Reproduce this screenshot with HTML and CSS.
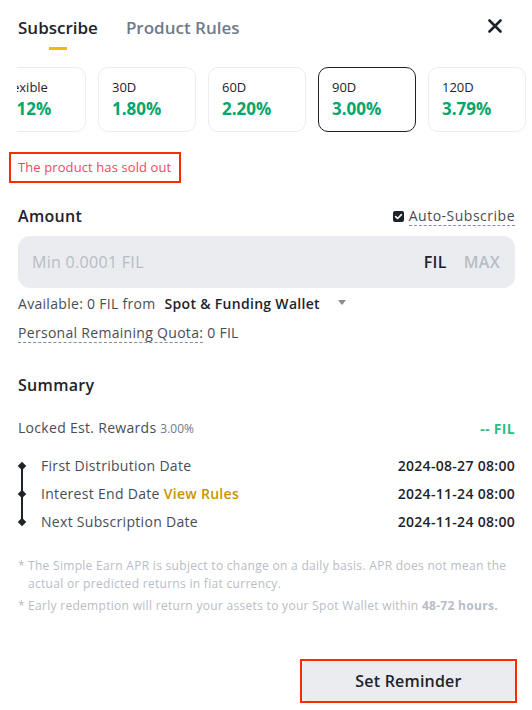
FILE: index.html
```html
<!DOCTYPE html>
<html lang="en">
<head>
<meta charset="utf-8">
<title>Subscribe</title>
<link rel="stylesheet" href="styles.css">
</head>
<body>
<div class="panel">
  <div class="tabs">
    <div class="tab active">Subscribe</div>
    <div class="tab">Product Rules</div>
    <div class="close" aria-label="Close">
      <svg width="14" height="14" viewBox="0 0 14 14"><path d="M1.5 1.5L12.5 12.5M12.5 1.5L1.5 12.5" stroke="#1e2329" stroke-width="2.6" stroke-linecap="round"/></svg>
    </div>
  </div>

  <div class="terms">
    <div class="terms-track">
      <div class="term"><div class="term-label">Flexible</div><div class="term-rate">0.12%</div></div>
      <div class="term"><div class="term-label">30D</div><div class="term-rate">1.80%</div></div>
      <div class="term"><div class="term-label">60D</div><div class="term-rate">2.20%</div></div>
      <div class="term selected"><div class="term-label">90D</div><div class="term-rate">3.00%</div></div>
      <div class="term"><div class="term-label">120D</div><div class="term-rate">3.79%</div></div>
    </div>
  </div>

  <div class="soldout">The product has sold out</div>

  <div class="amount-head">
    <div class="section-title">Amount</div>
    <label class="auto">
      <span class="checkbox"><svg width="9" height="9" viewBox="0 0 9 9"><path d="M1.6 4.6L3.6 6.5L7.4 2.6" fill="none" stroke="#fff" stroke-width="1.6" stroke-linecap="round" stroke-linejoin="round"/></svg></span>
      <span class="dashed">Auto-Subscribe</span>
    </label>
  </div>

  <div class="input">
    <span class="placeholder">Min 0.0001 FIL</span>
    <span class="unit">FIL</span>
    <span class="max">MAX</span>
  </div>

  <div class="avail">
    <span>Available: 0 FIL from</span>
    <span class="wallet">Spot &amp; Funding Wallet</span>
    <span class="caret"></span>
  </div>
  <div class="quota"><span class="dashed">Personal Remaining Quota:</span> 0 FIL</div>

  <div class="section-title summary">Summary</div>

  <div class="row rewards">
    <div>Locked Est. Rewards <span class="small">3.00%</span></div>
    <div class="green">-- FIL</div>
  </div>

  <div class="timeline">
    <div class="row tl-row">
      <div class="tl-left"><span class="diamond"></span>First Distribution Date</div>
      <div class="date">2024-08-27 08:00</div>
    </div>
    <div class="row tl-row">
      <div class="tl-left"><span class="diamond"></span>Interest End Date <span class="link">View Rules</span></div>
      <div class="date">2024-11-24 08:00</div>
    </div>
    <div class="row tl-row">
      <div class="tl-left"><span class="diamond"></span>Next Subscription Date</div>
      <div class="date">2024-11-24 08:00</div>
    </div>
  </div>

  <div class="notes">
    <div class="note"><span class="star">*</span><span>The Simple Earn APR is subject to change on a daily basis. APR does not mean the actual or predicted returns in fiat currency.</span></div>
    <div class="note"><span class="star">*</span><span>Early redemption will return your assets to your Spot Wallet within <b>48-72 hours.</b></span></div>
  </div>

  <div class="actions">
    <div class="btn-frame"><button class="btn">Set Reminder</button></div>
  </div>
</div>
</body>
</html>
```

FILE: styles.css
```css
html, body {
  margin: 0;
  padding: 0;
  background: #ffffff;
}
body {
  font-family: "Open Sans", Roboto, "Liberation Sans", sans-serif;
  color: #1e2329;
  font-size: 14px;
  letter-spacing: 0.3px;
}
.panel {
  padding: 0 17px 0 18px;
  width: 532px;
  box-sizing: border-box;
  overflow: hidden;
}
.tabs {
  height: 50px;
  display: flex;
  align-items: flex-start;
  gap: 28px;
  position: relative;
  letter-spacing: 0;
}
.tab {
  font-size: 17px;
  font-weight: 600;
  line-height: 24px;
  padding-top: 16px;
  color: #707a8a;
  position: relative;
}
.tab.active {
  color: #1e2329;
}
.tab.active::after {
  content: "";
  position: absolute;
  left: 50%;
  margin-left: -9px;
  top: 47px;
  width: 18px;
  height: 3px;
  background: #f0b90b;
}
.close {
  margin-left: auto;
  margin-right: 13px;
  padding-top: 19px;
  line-height: 0;
}
.terms {
  margin: 17px -17px 0 -1px;
  overflow: hidden;
  letter-spacing: 0;
}
.terms-track {
  display: flex;
  gap: 12px;
  margin-left: -29px;
}
.term {
  flex: 0 0 98px;
  box-sizing: border-box;
  height: 65px;
  border: 1px solid #eaecef;
  border-radius: 10px;
  padding: 9px 13px 0 13px;
}
.term.selected {
  border-color: #1e2329;
}
.term-label {
  font-size: 13px;
  line-height: 20px;
  color: #1e2329;
}
.term-rate {
  font-size: 17px;
  font-weight: 700;
  line-height: 24px;
  color: #03a66d;
}
.soldout {
  display: inline-block;
  margin: 20px 0 0 -9px;
  border: 2px solid #ff2a00;
  padding: 0 8px 0 7px;
  height: 27px;
  line-height: 27px;
  font-size: 13px;
  letter-spacing: 0.1px;
  color: #f6465d;
}
.amount-head {
  margin-top: 17px;
  display: flex;
  justify-content: space-between;
  align-items: center;
  height: 32px;
}
.section-title {
  font-size: 16px;
  font-weight: 600;
  color: #1e2329;
  line-height: 24px;
}
.auto {
  display: flex;
  align-items: center;
  gap: 5px;
  color: #474d57;
  font-size: 14px;
  letter-spacing: 0.5px;
}
.checkbox {
  width: 11px;
  height: 11px;
  border-radius: 2px;
  background: #1e2329;
  display: flex;
  align-items: center;
  justify-content: center;
}
.dashed {
  border-bottom: 1px dashed #848e9c;
  line-height: 18px;
}
.input {
  margin-top: 4px;
  height: 52px;
  border-radius: 12px;
  background: #eaecef;
  display: flex;
  align-items: center;
  padding: 0 15px 0 14px;
  font-size: 16px;
}
.placeholder {
  color: #b7bdc6;
  flex: 1;
}
.unit {
  font-weight: 600;
  color: #1e2329;
}
.max {
  font-weight: 600;
  color: #b7bdc6;
  margin-left: 17px;
}
.avail {
  margin-top: 6px;
  line-height: 20px;
  color: #474d57;
  display: flex;
  align-items: center;
}
.wallet {
  margin-left: 9px;
  font-weight: 600;
  color: #1e2329;
}
.caret {
  margin-left: 18px;
  width: 0;
  height: 0;
  border-left: 4.5px solid transparent;
  border-right: 4.5px solid transparent;
  border-top: 5px solid #848e9c;
  margin-top: -3px;
}
.quota {
  margin-top: 9px;
  line-height: 20px;
  color: #474d57;
}
.summary {
  margin-top: 30px;
}
.row {
  display: flex;
  justify-content: space-between;
  align-items: center;
  line-height: 20px;
}
.rewards {
  margin-top: 21px;
  color: #474d57;
}
.small {
  font-size: 12px;
  color: #707a8a;
  letter-spacing: 0;
}
.green {
  color: #2ebd85;
  font-weight: 700;
}
.timeline {
  margin-top: 17px;
  display: flex;
  flex-direction: column;
  gap: 8px;
  position: relative;
}
.timeline::before {
  content: "";
  position: absolute;
  left: 3px;
  top: 10px;
  bottom: 10px;
  width: 1.5px;
  background: #1e2329;
}
.tl-left {
  color: #474d57;
  display: flex;
  align-items: center;
}
.diamond {
  width: 6px;
  height: 6px;
  background: #1e2329;
  transform: rotate(45deg);
  margin: 0 16px 0 1px;
  position: relative;
}
.link {
  color: #c99400;
  font-weight: 600;
  margin-left: 4px;
}
.date {
  font-weight: 600;
  color: #1e2329;
}
.notes {
  margin-top: 25px;
  display: flex;
  flex-direction: column;
  gap: 4px;
  font-size: 12px;
  line-height: 18px;
  color: #b7bdc6;
}
.note {
  display: flex;
}
.star {
  flex: 0 0 10px;
}
.note b {
  font-weight: 700;
  color: #b7bdc6;
}
.actions {
  margin-top: 44px;
  display: flex;
  justify-content: flex-end;
  margin-right: -2px;
}
.btn-frame {
  border: 2px solid #ff2a00;
  line-height: 0;
}
.btn {
  width: 213px;
  height: 40px;
  border: none;
  border-radius: 5px;
  background: #eaecef;
  font-family: "Open Sans", Roboto, "Liberation Sans", sans-serif;
  font-size: 16px;
  font-weight: 600;
  letter-spacing: 0.2px;
  color: #1e2329;
  padding: 0;
}
```
